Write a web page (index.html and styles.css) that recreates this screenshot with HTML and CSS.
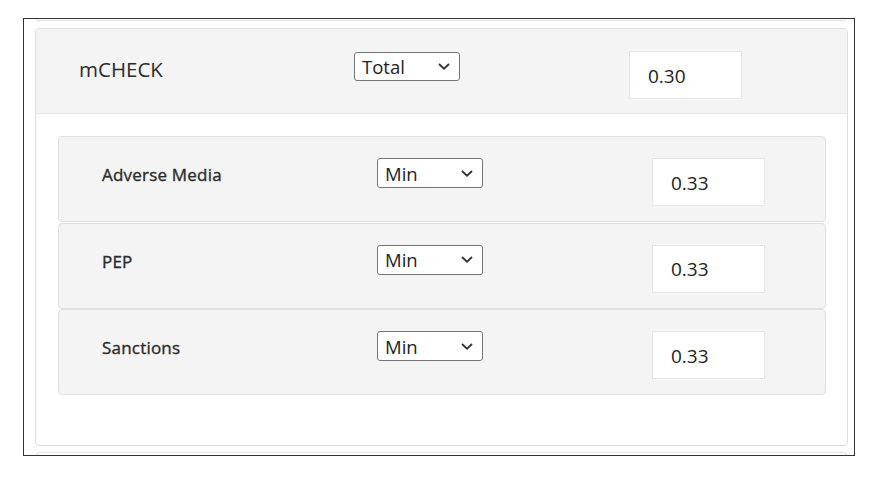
FILE: index.html
```html
<!DOCTYPE html>
<html>
<head>
<meta charset="utf-8">
<link rel="stylesheet" href="styles.css">
</head>
<body>
<div class="page">
  <div class="frame">
    <div class="list">
      <div class="card-stub"></div>
      <div class="card">
        <div class="row header">
          <div class="label main-label">mCHECK</div>
          <div class="select main-select"><span>Total</span><svg class="chev" width="12" height="7" viewBox="0 0 12 7"><polyline points="1,1 6,5.7 11,1" fill="none" stroke="#333" stroke-width="1.8"/></svg></div>
          <div class="value">0.30</div>
        </div>
        <div class="body">
          <div class="row sub">
            <div class="label sub-label">Adverse Media</div>
            <div class="select"><span>Min</span><svg class="chev" width="12" height="7" viewBox="0 0 12 7"><polyline points="1,1 6,5.7 11,1" fill="none" stroke="#333" stroke-width="1.8"/></svg></div>
            <div class="value">0.33</div>
          </div>
          <div class="row sub">
            <div class="label sub-label">PEP</div>
            <div class="select"><span>Min</span><svg class="chev" width="12" height="7" viewBox="0 0 12 7"><polyline points="1,1 6,5.7 11,1" fill="none" stroke="#333" stroke-width="1.8"/></svg></div>
            <div class="value">0.33</div>
          </div>
          <div class="row sub">
            <div class="label sub-label">Sanctions</div>
            <div class="select"><span>Min</span><svg class="chev" width="12" height="7" viewBox="0 0 12 7"><polyline points="1,1 6,5.7 11,1" fill="none" stroke="#333" stroke-width="1.8"/></svg></div>
            <div class="value">0.33</div>
          </div>
        </div>
      </div>
      <div class="card-stub next"></div>
    </div>
  </div>
</div>
</body>
</html>
```
FILE: styles.css
```css
* { box-sizing: border-box; }
html, body { margin: 0; padding: 0; background: #fff; }
body { font-family: "Open Sans", "Noto Sans", sans-serif; color: #2b2b2b; }
.page { padding: 18px 0 0 23px; }
.frame {
  width: 832px;
  height: 438px;
  border: 1px solid #333;
  overflow: hidden;
  background: #fff;
}
.list {
  display: flex;
  flex-direction: column;
  padding: 0 6px 0 11px;
}
.card-stub {
  height: 2px;
  border: 1px solid #e2e2e2;
  border-top: none;
  border-radius: 0 0 4px 4px;
  margin-bottom: 7px;
  margin-left: 1px;
  margin-right: 1px;
}
.card-stub.next {
  height: 6px;
  border-top: 1px solid #e2e2e2;
  border-bottom: none;
  border-radius: 4px 4px 0 0;
  margin-bottom: 0;
}
.card {
  height: 418px;
  border: 1px solid #dedede;
  border-radius: 4px;
  margin-bottom: 6px;
  overflow: hidden;
  background: #fff;
}
.row {
  display: grid;
  grid-template-columns: 275px 275px 1fr;
  align-items: start;
  padding-left: 43px;
}
.header {
  height: 85px;
  background: #f4f4f4;
  border-bottom: 1px solid #e2e2e2;
  padding-top: 22px;
}
.body {
  display: flex;
  flex-direction: column;
  gap: 0.5px;
  padding: 22px 21px 0 22px;
}
.sub {
  height: 86px;
  background: #f4f4f4;
  border: 1px solid #e0e0e0;
  border-radius: 4px;
  padding-top: 21px;
}
.label { line-height: 24px; }
.main-label { font-size: 20.5px; margin-top: 6px; }
.sub-label {
  font-size: 17px;
  margin-top: 5px;
  letter-spacing: 0.2px;
  -webkit-text-stroke: 0.35px #2b2b2b;
}
.select {
  width: 106px;
  height: 30px;
  border: 1px solid #767676;
  border-radius: 3px;
  background: #fff;
  display: flex;
  align-items: center;
  justify-content: space-between;
  padding: 0 9px 0 7px;
  font-size: 18.5px;
  color: #222;
}
.main-select { margin-top: 1px; height: 29px; }
.chev { display: block; }
.value {
  width: 113px;
  height: 48px;
  border: 1px solid #e6e6e6;
  background: #fff;
  display: flex;
  align-items: center;
  padding: 1px 0 0 18px;
  font-size: 19px;
  color: #222;
}
```
